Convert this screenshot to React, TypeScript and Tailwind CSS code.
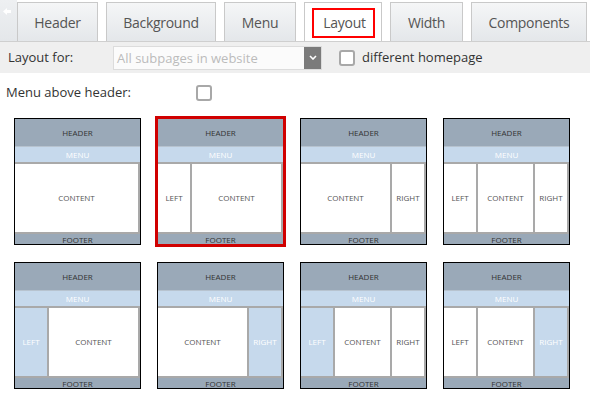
import React from 'react';

type Col = 'none' | 'white' | 'blue';

const tabs = [
  { label: 'Header', w: 'w-[81px]' },
  { label: 'Background', w: 'w-[110px]' },
  { label: 'Menu', w: 'w-[72px]' },
  { label: 'Layout', w: 'w-[78px]', active: true },
  { label: 'Width', w: 'w-[73px]' },
  { label: 'Components', w: 'w-[116px]' },
];

const layouts: { left: Col; right: Col; selected?: boolean }[] = [
  { left: 'none', right: 'none' },
  { left: 'white', right: 'none', selected: true },
  { left: 'none', right: 'white' },
  { left: 'white', right: 'white' },
  { left: 'blue', right: 'none' },
  { left: 'none', right: 'blue' },
  { left: 'blue', right: 'white' },
  { left: 'white', right: 'blue' },
];

const Checkbox: React.FC = () => (
  <div className="w-[16px] h-[16px] rounded-[3px] border-2 border-[#a8a8a8] bg-white shrink-0" />
);

const Side: React.FC<{ kind: Col; label: string; edge: 'l' | 'r' }> = ({ kind, label, edge }) => {
  if (kind === 'none') return null;
  return (
    <div
      className={`w-[34px] shrink-0 flex items-center justify-center ${
        edge === 'l' ? 'border-r-2' : 'border-l-2'
      } border-[#a9a9a9] ${kind === 'blue' ? 'bg-[#c6d9ec] text-white' : 'bg-white text-[#555]'}`}
    >
      {label}
    </div>
  );
};

const LayoutCard: React.FC<{ left: Col; right: Col; selected?: boolean }> = ({ left, right, selected }) => (
  <div
    className={`w-[127px] h-[127px] flex flex-col border overflow-hidden text-[8px] leading-none ${
      selected ? 'border-[#d00000] outline-2 outline-[#d00000]' : 'border-black'
    }`}
  >
    <div className="h-[27px] shrink-0 bg-[#9aa9b8] text-[#333] flex items-center justify-center">HEADER</div>
    <div className="h-[16px] shrink-0 bg-[#c6d9ec] border-t border-[#b7c3cf] text-white flex items-center justify-center">
      MENU
    </div>
    <div className="flex-1 flex border-t-2 border-r-2 border-b-2 border-[#a9a9a9] bg-white">
      <Side kind={left} label="LEFT" edge="l" />
      <div className="flex-1 flex items-center justify-center text-[#555]">CONTENT</div>
      <Side kind={right} label="RIGHT" edge="r" />
    </div>
    <div className="h-[10px] shrink-0 bg-[#9aa9b8] text-[#333] flex items-start justify-center pt-[2px]">FOOTER</div>
  </div>
);

export default function App() {
  return (
    <div className="w-[590px] h-[399px] bg-white overflow-hidden font-['Open_Sans',sans-serif] text-[13px] text-[#333]">
      {/* tab bar */}
      <div className="flex h-[41px] items-end gap-2">
        <div className="w-[17px] h-full bg-gradient-to-b from-[#eef0f2] to-[#e4e7ea] -mr-2 pt-[8px] pl-[3px]">
          <svg width="8" height="7" viewBox="0 0 8 7">
            <polygon points="0,3.5 4,0 4,2 8,2 8,5 4,5 4,7" fill="#fff" />
          </svg>
        </div>
        {tabs.map((t) => (
          <div
            key={t.label}
            className={`${t.w} h-[39px] shrink-0 border border-b-0 border-[#c9c9c9] flex items-center justify-center text-[#555] text-[14px] tracking-[-0.3px] ${
              t.active ? 'bg-white' : 'bg-gradient-to-b from-[#f5f6f7] to-[#e4e7ea]'
            }`}
          >
            {t.active ? (
              <span className="border-2 border-[#ff0000] w-[63px] h-[30px] mt-[5px] mb-[4px] flex items-center justify-center pl-[3px]">
                {t.label}
              </span>
            ) : (
              t.label
            )}
          </div>
        ))}
      </div>

      {/* layout for */}
      <div className="h-[32px] bg-[#efefef] border-t border-[#cfcfcf] flex items-center pl-[8px]">
        <span className="w-[105px]">Layout for:</span>
        <div className="w-[209px] h-[24px] flex border border-[#dcdcdc] bg-[#fbfbfb]">
          <span className="flex-1 pl-[3px] text-[#bbb] leading-[22px]">All subpages in website</span>
          <div className="w-[17px] bg-[#7b7b7b] flex items-center justify-center">
            <svg width="8" height="5" viewBox="0 0 8 5">
              <polyline points="1,1 4,4 7,1" fill="none" stroke="#fff" strokeWidth="1.6" />
            </svg>
          </div>
        </div>
        <div className="ml-[17px]">
          <Checkbox />
        </div>
        <span className="ml-[7px]">different homepage</span>
      </div>

      {/* menu above header */}
      <div className="h-[40px] flex items-center pl-[6px]">
        <span className="w-[190px]">Menu above header:</span>
        <Checkbox />
      </div>

      {/* layouts */}
      <div className="grid grid-cols-[repeat(4,127px)] gap-x-[16px] gap-y-[17px] pl-[14px] pt-[5px]">
        {layouts.map((l, i) => (
          <LayoutCard key={i} {...l} />
        ))}
      </div>
    </div>
  );
}
